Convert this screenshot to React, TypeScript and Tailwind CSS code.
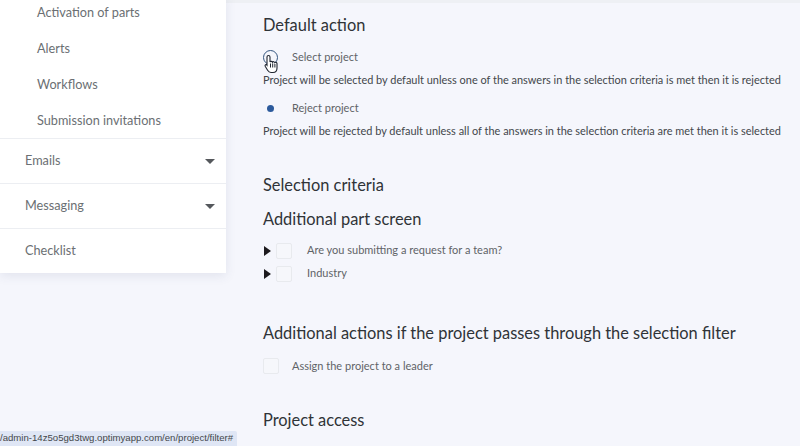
import React from "react";

const font = { fontFamily: 'Lato, sans-serif' };

function Sub({ children }: { children: React.ReactNode }) {
  return <div className="h-9 flex items-center pl-[37px] pt-[1px] text-[12.7px] text-[#6b6f73]">{children}</div>;
}

function Section({ label, caret }: { label: string; caret?: boolean }) {
  return (
    <div className="h-[45px] border-t border-[#eceef2] flex items-center justify-between pl-[25px] pr-[11px] text-[12.7px] text-[#6b6f73]">
      <span>{label}</span>
      {caret && <span className="w-0 h-0 border-l-[5px] border-r-[5px] border-t-[5px] border-l-transparent border-r-transparent border-t-[#55585c]" />}
    </div>
  );
}

function Heading({ children, className }: { children: React.ReactNode; className: string }) {
  return <h2 className={`text-[16.4px] leading-6 text-[#2f3337] ${className}`}>{children}</h2>;
}

function Box() {
  return <span className="w-[16px] h-[16px] rounded-[2px] border border-[#e8eaee] bg-[#f6f7fb] shrink-0" />;
}

function QuestionRow({ label }: { label: string }) {
  return (
    <div className="h-[23px] flex items-center text-[11px] text-[#5f6367]">
      <span className="ml-[1px] w-0 h-0 border-t-[5px] border-b-[5px] border-l-[7px] border-t-transparent border-b-transparent border-l-[#1d1a1e] shrink-0" />
      <span className="ml-[5px] flex"><Box /></span>
      <span className="ml-[15px]">{label}</span>
    </div>
  );
}

export default function App() {
  return (
    <div className="relative w-[800px] h-[446px] overflow-hidden bg-[#f5f6fc] flex" style={font}>
      <div className="absolute top-0 left-0 right-0 h-[3px] bg-[#eef0f4]" />
      <aside className="relative w-[226px] h-[279px] -mt-[6px] bg-white shadow-[0_3px_10px_rgba(60,70,110,0.10)] shrink-0">
        <Sub>Activation of parts</Sub>
        <Sub>Alerts</Sub>
        <Sub>Workflows</Sub>
        <Sub>Submission invitations</Sub>
        <Section label="Emails" caret />
        <Section label="Messaging" caret />
        <Section label="Checklist" />
      </aside>
      <main className="ml-[37px] w-[530px] shrink-0">
        <Heading className="mt-[13px]">Default action</Heading>

        <div className="relative mt-[10px] h-[20px] flex items-center text-[11px] text-[#5f6367]">
          <span className="w-[15px] h-[15px] rounded-full border-[1.5px] border-[#34557f] shrink-0" />
          <span className="ml-[14px]">Select project</span>
          <svg className="absolute left-[1px] top-[7px]" width="15" height="20" viewBox="0 0 15 20">
            <path
              d="M4.5 1.5c.9 0 1.5.6 1.5 1.5v5c.3-.9 2.2-.9 2.5.2.4-.8 2-.7 2.3.4.5-.6 2.2-.4 2.2 1v4.4c0 2.4-1.5 4.5-4 4.5H7c-1.7 0-2.6-.9-3.4-2.2L1.2 12.2c-.6-1.2.9-2.2 1.8-1.1L3 11.1V3c0-.9.6-1.5 1.5-1.5Z"
              fill="#fff"
              stroke="#1f2530"
              strokeWidth="1.1"
            />
            <path d="M6.5 9.5v4M8.7 9.5v4M10.9 10v3.5" stroke="#1f2530" strokeWidth="1" />
          </svg>
        </div>
        <p className="mt-[3px] h-[20px] leading-[20px] text-[10.95px] text-[#43474b] whitespace-nowrap">
          Project will be selected by default unless one of the answers in the selection criteria is met then it is rejected
        </p>

        <div className="mt-[8px] h-[20px] flex items-center text-[11px] text-[#5f6367]">
          <span className="w-[15px] h-[15px] flex items-center justify-center shrink-0">
            <span className="w-[7px] h-[7px] rounded-full bg-[#2c5a9c]" />
          </span>
          <span className="ml-[14px]">Reject project</span>
        </div>
        <p className="mt-[3px] h-[20px] leading-[20px] text-[10.95px] text-[#43474b] whitespace-nowrap">
          Project will be rejected by default unless all of the answers in the selection criteria are met then it is selected
        </p>

        <Heading className="mt-[32px]">Selection criteria</Heading>
        <Heading className="mt-[10px]">Additional part screen</Heading>

        <div className="mt-[8px]">
          <QuestionRow label="Are you submitting a request for a team?" />
          <QuestionRow label="Industry" />
        </div>

        <Heading className="mt-[36px] whitespace-nowrap">Additional actions if the project passes through the selection filter</Heading>
        <div className="mt-[11px] h-[20px] flex items-center text-[11px] text-[#5f6367]">
          <span className="-mr-[1px] flex"><Box /></span>
          <span className="ml-[14px]">Assign the project to a leader</span>
        </div>
        <Heading className="mt-[32px]">Project access</Heading>
      </main>
      <div className="absolute left-0 bottom-0 w-[237px] h-[15px] bg-[#dfe6f5] rounded-tr-[2px] overflow-hidden flex items-center text-[9.6px] text-[#44484c] whitespace-nowrap" style={{ fontFamily: '"Liberation Sans", sans-serif' }}>
        /admin-14z5o5gd3twg.optimyapp.com/en/project/filter#
      </div>
    </div>
  );
}
